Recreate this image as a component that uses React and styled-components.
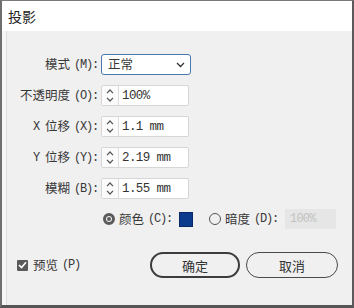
import React, { useState } from 'react';
import styled, { createGlobalStyle } from 'styled-components';

const GlobalStyle = createGlobalStyle`
  html, body {
    margin: 0;
    padding: 0;
    background: #f0f0f0;
  }
  * {
    box-sizing: border-box;
  }
`;

const Window = styled.div`
  width: 354px;
  height: 308px;
  display: flex;
  flex-direction: column;
  border-top: 1px solid #7a7a7a;
  border-left: 2px solid #6e6e6e;
  border-right: 2px solid #5a5a5a;
  border-bottom: 3px solid #555;
  background: #f0f0f0;
  font-family: "Noto Sans CJK SC", sans-serif;
  color: #383838;
  overflow: hidden;
`;

const TitleBar = styled.div`
  height: 30px;
  flex-shrink: 0;
  background: #fff;
  display: flex;
  align-items: center;
  padding-left: 6px;
  font-size: 14px;
  color: #222;
`;

const Body = styled.div`
  flex: 1;
  display: flex;
  flex-direction: column;
  padding-top: 23px;
  box-shadow: inset 4px 0 0 #f6f6f6, inset 5px 0 0 #dedede;
`;

const Form = styled.div`
  display: grid;
  grid-template-columns: 96px 90px;
  grid-auto-rows: 21px;
  column-gap: 3px;
  row-gap: 10px;
  align-items: center;
`;

const Label = styled.span`
  display: flex;
  justify-content: flex-end;
  align-items: center;
  height: 21px;
  font-size: 12.5px;
  line-height: 1;
  white-space: nowrap;
`;

const Lat = styled.span`
  font-family: "Liberation Mono", monospace;
  font-size: 12px;
  line-height: 1;
  letter-spacing: -1.2px;
  margin-left: ${({ $gap }) => ($gap ? '4px' : '0')};
  margin-right: ${({ $after }) => ($after ? '6px' : '0')};
`;

const Select = styled.div`
  height: 21px;
  border: 1px solid #4878ad;
  border-radius: 3px;
  background: #fff;
  display: flex;
  align-items: center;
  justify-content: space-between;
  padding: 0 5px 0 6px;
  font-size: 12.5px;
  line-height: 1;
`;

const Spin = styled.div`
  height: 21px;
  width: 88px;
  display: flex;
  border: 1px solid #d6d6d6;
  border-radius: 2px;
  background: #fff;
`;

const SpinArrows = styled.div`
  width: 17px;
  border-right: 1px solid #dcdcdc;
  display: flex;
  flex-direction: column;
  align-items: center;
  justify-content: center;
  gap: 3px;
  background: #fbfbfb;
`;

const SpinValue = styled.div`
  flex: 1;
  display: flex;
  align-items: center;
  padding-left: 3px;
  font-family: "Liberation Mono", monospace;
  font-size: 12.5px;
  letter-spacing: -0.6px;
  color: #333;
`;

const RadioRow = styled.div`
  display: flex;
  align-items: center;
  padding-left: 101px;
  margin-top: 10px;
  height: 20px;
`;

const Radio = styled.span`
  width: 12px;
  height: 12px;
  border-radius: 50%;
  flex-shrink: 0;
  margin-left: ${({ $ml }) => $ml || 0}px;
  margin-right: 4px;
  background: ${({ $on }) => ($on ? '#fff' : 'transparent')};
  border: ${({ $on }) => ($on ? '3px solid #5a5a5a' : '1px solid #555')};
  box-shadow: ${({ $on }) => ($on ? 'inset 0 0 0 1px #fff, inset 0 0 0 3px #5a5a5a' : 'none')};
`;

const RadioLabel = styled.span`
  display: flex;
  align-items: center;
  font-size: 12.5px;
  line-height: 1;
  white-space: nowrap;
`;

const Swatch = styled.span`
  width: 14px;
  height: 15px;
  margin-left: 7px;
  background: #0c3a8c;
  border: 1px solid #08286a;
`;

const DisabledInput = styled.div`
  width: 51px;
  height: 20px;
  margin-left: 7px;
  background: #e6e6e6;
  display: flex;
  align-items: center;
  padding-left: 5px;
  font-family: "Liberation Mono", monospace;
  font-size: 12px;
  letter-spacing: -0.8px;
  color: #c2c2c2;
`;

const Footer = styled.div`
  display: flex;
  align-items: center;
  margin-top: 23px;
  padding-left: 15px;
`;

const Check = styled.span`
  width: 11px;
  height: 11px;
  background: #5a5a5a;
  border-radius: 1px;
  display: flex;
  align-items: center;
  justify-content: center;
  margin-right: 5px;
`;

const CheckLabel = styled.span`
  display: flex;
  align-items: center;
  font-size: 12.5px;
  line-height: 1;
  flex: 1;
`;

const Buttons = styled.div`
  display: flex;
  gap: 6px;
  margin-right: 14px;
`;

const Button = styled.button`
  width: ${({ $w }) => $w}px;
  height: 26px;
  border-radius: 13px;
  background: transparent;
  border: ${({ $primary }) => ($primary ? '2px solid #3c3c3c' : '1.5px solid #4a4a4a')};
  font-family: "Noto Sans CJK SC", sans-serif;
  font-size: 13px;
  color: #333;
  padding: 0;
  cursor: pointer;
`;

const Chevron = ({ up }) => (
  <svg width="8" height="5" viewBox="0 0 8 5">
    <path
      d={up ? 'M1 4.2 L4 1 L7 4.2' : 'M1 0.8 L4 4 L7 0.8'}
      fill="none"
      stroke="#555"
      strokeWidth="1.2"
    />
  </svg>
);

const Spinner = ({ value }) => (
  <Spin>
    <SpinArrows>
      <Chevron up />
      <Chevron />
    </SpinArrows>
    <SpinValue>{value}</SpinValue>
  </Spin>
);

const fields = [
  { label: <>不透明度<Lat $gap>(O):</Lat></>, value: '100%' },
  { label: <><Lat $after>X</Lat>位移<Lat $gap>(X):</Lat></>, value: '1.1 mm' },
  { label: <><Lat $after>Y</Lat>位移<Lat $gap>(Y):</Lat></>, value: '2.19 mm' },
  { label: <>模糊<Lat $gap>(B):</Lat></>, value: '1.55 mm' },
];

export default function App() {
  const [preview, setPreview] = useState(true);

  return (
    <>
      <GlobalStyle />
      <Window>
        <TitleBar>投影</TitleBar>
        <Body>
          <Form>
            <Label>模式<Lat $gap>(M):</Lat></Label>
            <Select>
              <span>正常</span>
              <svg width="9" height="6" viewBox="0 0 9 6">
                <path d="M1 1 L4.5 4.5 L8 1" fill="none" stroke="#333" strokeWidth="1.3" />
              </svg>
            </Select>
            {fields.map((f, i) => (
              <React.Fragment key={i}>
                <Label>{f.label}</Label>
                <Spinner value={f.value} />
              </React.Fragment>
            ))}
          </Form>
          <RadioRow>
            <Radio $on />
            <RadioLabel>颜色<Lat $gap>(C):</Lat></RadioLabel>
            <Swatch />
            <Radio $ml={16} />
            <RadioLabel>暗度<Lat $gap>(D):</Lat></RadioLabel>
            <DisabledInput>100%</DisabledInput>
          </RadioRow>
          <Footer>
            <Check onClick={() => setPreview(!preview)}>
              {preview && (
                <svg width="9" height="8" viewBox="0 0 9 8">
                  <path d="M1 4 L3.5 6.5 L8 1.2" fill="none" stroke="#fff" strokeWidth="1.6" />
                </svg>
              )}
            </Check>
            <CheckLabel>预览<Lat $gap>(P)</Lat></CheckLabel>
            <Buttons>
              <Button $primary $w={90}>确定</Button>
              <Button $w={92}>取消</Button>
            </Buttons>
          </Footer>
        </Body>
      </Window>
    </>
  );
}
